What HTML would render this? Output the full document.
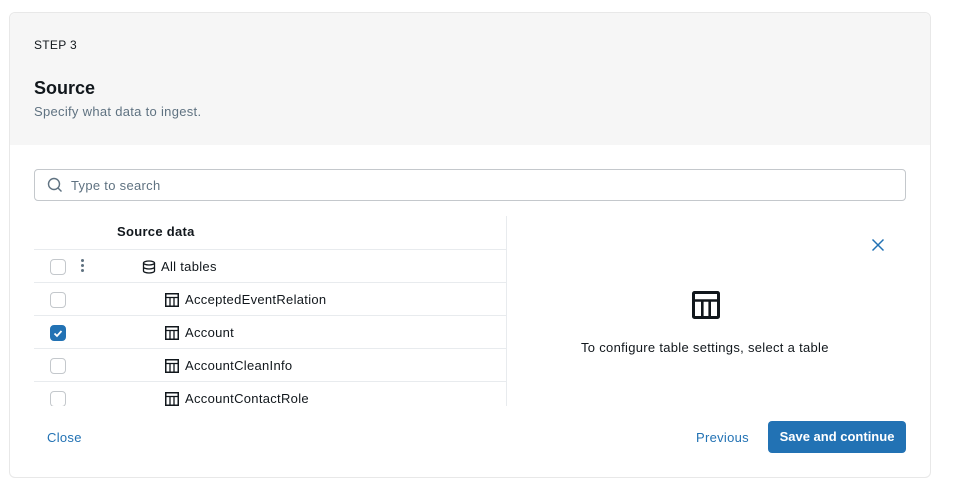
<!DOCTYPE html>
<html><head><style>
*{box-sizing:border-box;margin:0;padding:0}
body{width:961px;height:496px;background:#fff;font-family:"Liberation Sans",sans-serif;color:#11171c;position:relative;overflow:hidden}
.card{position:absolute;left:9px;top:12px;width:922px;height:466px;border:1px solid #e8e8e8;border-radius:6px;overflow:hidden;background:#fff}
.abs{position:absolute}
.t{font-size:13px;letter-spacing:0.3px}
.row{position:absolute;left:34px;width:472px;height:33px;border-top:1px solid #e8ebee}
.cb{position:absolute;left:16px;top:9px;width:16px;height:16px;border:1px solid #c4c8cc;border-radius:4px;background:#fff}
.lbl{position:absolute;left:151px;top:9px;font-size:13px;letter-spacing:0.3px;white-space:nowrap}
.ti{position:absolute;left:131px;top:10px}
</style></head><body>
<div class="card"></div>
<div class="abs" style="left:10px;top:13px;width:920px;height:132px;background:#f6f6f6;border-radius:6px 6px 0 0"></div>
<div class="abs" style="left:34px;top:38px;font-size:12px;letter-spacing:0.3px;color:#11171c">STEP 3</div>
<div class="abs" style="left:34px;top:78px;font-size:18px;font-weight:bold">Source</div>
<div class="abs t" style="left:34px;top:104px;color:#5f7281">Specify what data to ingest.</div>
<div class="abs" style="left:34px;top:169px;width:872px;height:32px;border:1px solid #c4c8cc;border-radius:4px"></div>
<svg class="abs" style="left:47px;top:177px" width="16" height="16" viewBox="0 0 16 16"><circle cx="7" cy="7" r="5.5" fill="none" stroke="#5f7281" stroke-width="1.4"/><path d="M11 11l3.5 3.5" stroke="#5f7281" stroke-width="1.4"/></svg>
<div class="abs t" style="left:71px;top:178px;color:#5f7281">Type to search</div>
<div class="abs t" style="left:117px;top:224px;font-weight:bold">Source data</div>
<div class="abs" style="left:506px;top:216px;width:1px;height:190px;background:#e8ebee"></div>
<div class="abs" style="left:0;top:249px;width:961px;height:157px;overflow:hidden">
 <div class="row" style="top:0"><div class="cb"></div>
  <div class="abs" style="left:47px;top:9px;width:3px;height:3px;border-radius:2px;background:#5f7281;box-shadow:0 5px 0 #5f7281,0 10px 0 #5f7281"></div>
  <svg class="abs" style="left:108px;top:10px" width="14" height="14" viewBox="0 0 14 14"><ellipse cx="7" cy="3" rx="5.5" ry="2" fill="none" stroke="#11171c" stroke-width="1.3"/><path d="M1.5 3v8c0 1.1 2.5 2 5.5 2s5.5-.9 5.5-2V3M1.5 7c0 1.1 2.5 2 5.5 2s5.5-.9 5.5-2" fill="none" stroke="#11171c" stroke-width="1.3"/></svg>
  <div class="lbl" style="left:127px">All tables</div></div>
 <div class="row" style="top:33px"><div class="cb"></div><svg class="ti" width="14" height="14" viewBox="0 0 14 14"><rect x="0.75" y="0.75" width="12.5" height="12.5" fill="none" stroke="#11171c" stroke-width="1.5"/><path d="M1 4.5h12M5 4.5v9M9 4.5v9" stroke="#11171c" stroke-width="1.3"/></svg><div class="lbl">AcceptedEventRelation</div></div>
 <div class="row" style="top:66px"><div class="cb" style="background:#2272b4;border-color:#2272b4"><svg width="14" height="14" viewBox="0 0 14 14"><path d="M3.5 7.5l2.5 2.5 4.5-5" fill="none" stroke="#fff" stroke-width="1.8"/></svg></div><svg class="ti" width="14" height="14" viewBox="0 0 14 14"><rect x="0.75" y="0.75" width="12.5" height="12.5" fill="none" stroke="#11171c" stroke-width="1.5"/><path d="M1 4.5h12M5 4.5v9M9 4.5v9" stroke="#11171c" stroke-width="1.3"/></svg><div class="lbl">Account</div></div>
 <div class="row" style="top:99px"><div class="cb"></div><svg class="ti" width="14" height="14" viewBox="0 0 14 14"><rect x="0.75" y="0.75" width="12.5" height="12.5" fill="none" stroke="#11171c" stroke-width="1.5"/><path d="M1 4.5h12M5 4.5v9M9 4.5v9" stroke="#11171c" stroke-width="1.3"/></svg><div class="lbl">AccountCleanInfo</div></div>
 <div class="row" style="top:132px"><div class="cb"></div><svg class="ti" width="14" height="14" viewBox="0 0 14 14"><rect x="0.75" y="0.75" width="12.5" height="12.5" fill="none" stroke="#11171c" stroke-width="1.5"/><path d="M1 4.5h12M5 4.5v9M9 4.5v9" stroke="#11171c" stroke-width="1.3"/></svg><div class="lbl">AccountContactRole</div></div>
</div>
<svg class="abs" style="left:871px;top:238px" width="14" height="14" viewBox="0 0 14 14"><path d="M1.5 1.5l11 11M12.5 1.5l-11 11" stroke="#2272b4" stroke-width="1.5"/></svg>
<svg class="abs" style="left:692px;top:291px" width="28" height="28" viewBox="0 0 28 28"><rect x="1.5" y="1.5" width="25" height="25" rx="1" fill="none" stroke="#11171c" stroke-width="3"/><path d="M2 9.5h24M10.3 9.5v17M17.7 9.5v17" stroke="#11171c" stroke-width="2.6"/></svg>
<div class="abs t" style="left:581px;top:340px">To configure table settings, select a table</div>
<div class="abs t" style="left:47px;top:430px;color:#2272b4">Close</div>
<div class="abs t" style="left:696px;top:430px;color:#2272b4">Previous</div>
<div class="abs" style="left:768px;top:421px;width:138px;height:32px;background:#2272b4;border-radius:4px;color:#fff;font-size:13px;font-weight:bold;text-align:center;line-height:32px">Save and continue</div>
</body></html>
